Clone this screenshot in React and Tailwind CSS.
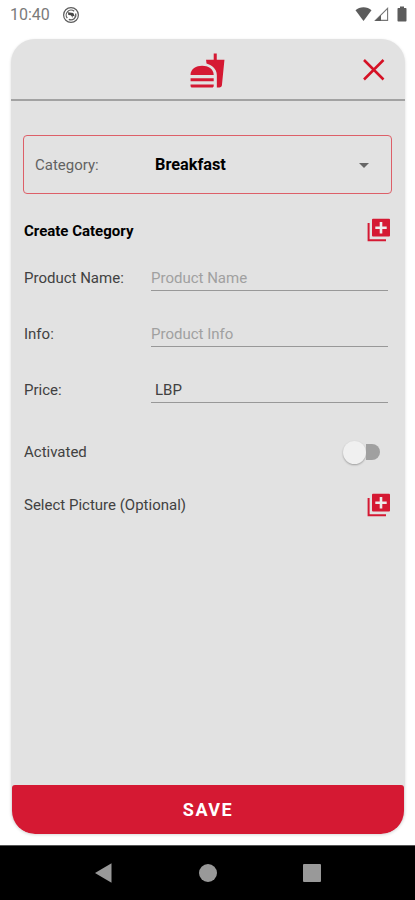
import { useState } from 'react';
import { MdArrowDropDown, MdFastfood } from 'react-icons/md';

function StatusBar() {
  return (
    <div className="h-[39px] shrink-0 flex items-start justify-between pl-[10px] pr-[8px] text-[#5c5c5c]">
      <div className="flex items-center pt-[5px]">
        <span className="w-[41px] text-[16px] leading-[20px] text-[#7a7a7a]">10:40</span>
        <svg className="ml-[11px] size-[18px] -mt-px" viewBox="0 0 18 18" fill="none" stroke="currentColor">
          <circle cx="9" cy="9" r="7.4" strokeWidth="1.2" />
          <path d="M5.300 12.200a4.900 4.900 0 0 1 6.900-6.900M13.600 7.500a4.900 4.900 0 0 1-6.800 5.900" strokeWidth="1.200" />
          <path d="M6 6.300 11.300 7l1.500 3.500-2.300-.7L11 12 8.800 9.300 6.300 9z" fill="#444" stroke="none" />
        </svg>
      </div>
      <div className="flex items-center pt-[6px]">
        <svg className="w-[17px] h-[16px]" viewBox="0 0 17 16" fill="currentColor">
          <path d="M.5 4.300C2.600 2.400 5.400 1.200 8.500 1.200s5.900 1.200 8 3.100L8.500 15z" />
        </svg>
        <svg className="ml-[2px] w-[15px] h-[16px]" viewBox="0 0 15 16" fill="none">
          <path d="M1.500 14.400 13.600 2.300v12.100z" stroke="#777" strokeWidth="1.100" />
          <path d="M1 14.900 7 8.900v6z" fill="#5c5c5c" />
        </svg>
        <svg className="ml-[8px] w-[10px] h-[16px]" viewBox="0 0 10 16" fill="currentColor">
          <path d="M3 .5h4v1.500h1.500c.6 0 1 .4 1 1v11.500c0 .6-.4 1-1 1h-7c-.6 0-1-.4-1-1V3c0-.6.4-1 1-1H3z" />
        </svg>
      </div>
    </div>
  );
}

function Field({ label, placeholder, defaultValue, padding = '' }) {
  return (
    <label className="h-[56px] flex items-start">
      <span className="w-[127px] pt-[7px] leading-[20px]">{label}</span>
      <input
        type="text"
        placeholder={placeholder}
        defaultValue={defaultValue}
        className={`w-[237px] h-[30px] pt-[6px] pb-[2px] leading-[20px] border-b-[1.5px] border-[#989898] outline-none placeholder:text-[#a0a0a0] ${padding}`}
      />
    </label>
  );
}

function AddButton({ label }) {
  return (
    <button type="button" aria-label={label}>
      <svg className="size-[24px]" viewBox="0 0 24 24">
        <path d="M1.600 5v17.300H19" fill="none" stroke="#d51933" strokeWidth="2" />
        <rect x="5" y=".8" width="18" height="17.800" rx="1" fill="#d51933" />
        <path d="M14 4v11.400M8.300 9.700h11.400" stroke="#ececec" strokeWidth="2.600" />
      </svg>
    </button>
  );
}

function NavigationBar() {
  return (
    <div className="h-[55px] shrink-0 bg-black border-t border-[#555] flex items-center justify-center gap-[78px] text-[#999]">
      <svg className="size-[26px]" viewBox="0 0 26 26" fill="currentColor">
        <path d="M4 13 20.500 3.300v19.400z" />
      </svg>
      <svg className="size-[26px]" viewBox="0 0 26 26" fill="currentColor">
        <circle cx="13" cy="13" r="9" />
      </svg>
      <svg className="size-[26px]" viewBox="0 0 26 26" fill="currentColor">
        <rect x="4" y="4" width="18" height="18" rx="1" />
      </svg>
    </div>
  );
}

function App() {
  const [activated, setActivated] = useState(false);

  return (
    <div className="w-[415px] h-[900px] flex flex-col bg-white font-['Roboto',sans-serif] text-[15px] text-[#414141]">
      <StatusBar />

      <div className="flex-1 ml-[11px] mr-[10px] mb-[11px] flex flex-col bg-[#e2e2e2] rounded-[24px] overflow-hidden shadow-[0_1px_3px_rgba(0,0,0,0.15)]">
        <header className="h-[62px] shrink-0 grid grid-cols-3 items-center border-b-2 border-[#a2a2a2]">
          <MdFastfood className="col-start-2 justify-self-center mt-[2px] size-[37px] text-[#d51933]" />
          <button type="button" aria-label="Close" className="justify-self-end mt-[2px] mr-[19px]">
            <svg className="size-[24px]" viewBox="0 0 24 24" fill="none" stroke="#d51125" strokeWidth="2.500">
              <path d="m2 2 19.500 19.500M21.500 2 2 21.500" />
            </svg>
          </button>
        </header>

        <main className="flex-1 pt-[34px] px-[13px]">
          <div className="h-[59px] -ml-px flex items-center border border-[#dd5f68] rounded-[4px] pl-[11px] pr-[15px]">
            <span className="w-[120px] pt-[2px] text-[#626262]">Category:</span>
            <span className="flex-1 pt-px text-[16.300px] font-bold text-black">Breakfast</span>
            <MdArrowDropDown className="size-[24px] text-[#666]" />
          </div>

          <div className="h-[67px] pt-[24px] flex items-start justify-between pr-px">
            <h2 className="pt-[2px] leading-[22px] font-bold text-black">Create Category</h2>
            <AddButton label="Create category" />
          </div>

          <Field label="Product Name:" placeholder="Product Name" />
          <Field label="Info:" placeholder="Product Info" />
          <Field label="Price:" defaultValue="LBP" padding="pl-[4px]" />

          <div className="h-[48px] flex items-center justify-between pr-[12px]">
            <span className="pb-px">Activated</span>
            <button
              type="button"
              role="switch"
              aria-label="Activated"
              aria-checked={activated}
              onClick={() => setActivated(!activated)}
              className={`w-[37px] h-[23px] -mt-[2px] flex items-center ${activated ? 'flex-row-reverse' : ''}`}
            >
              <span className="size-[23px] shrink-0 rounded-full bg-[#f0f0f0] shadow-[0_1px_2px_rgba(0,0,0,0.3)]" />
              <span className="w-[14px] h-[16px] rounded-r-full bg-[#a0a0a0]" />
            </button>
          </div>

          <div className="h-[56px] flex items-center justify-between pr-px">
            <span className="pt-px">Select Picture (Optional)</span>
            <AddButton label="Select picture" />
          </div>
        </main>

        <button type="button" className="h-[49px] shrink-0 mx-px rounded-t-[3px] rounded-b-[23px] bg-[#d51933] text-white text-[18px] font-bold tracking-[1.500px]">
          SAVE
        </button>
      </div>

      <NavigationBar />
    </div>
  );
}

export default App;
